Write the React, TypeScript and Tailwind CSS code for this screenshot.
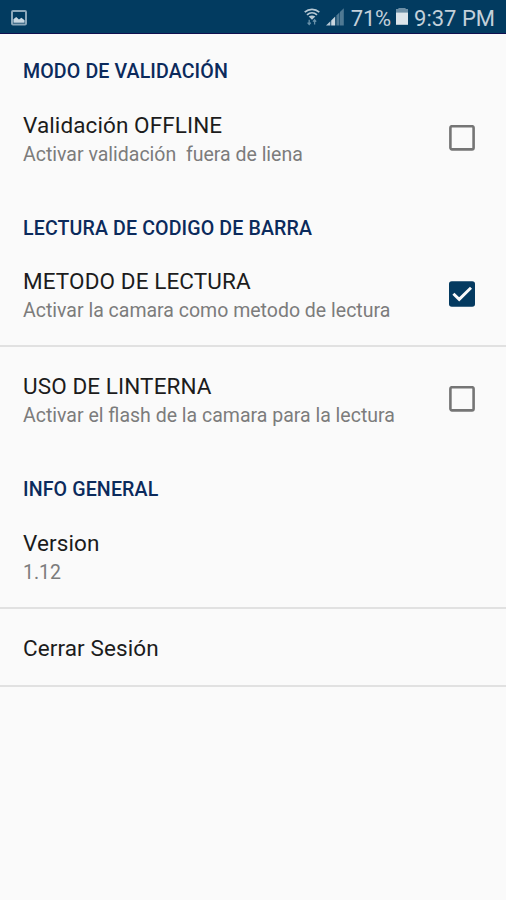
import React, { useState } from 'react';

interface CheckboxProps {
  checked: boolean;
}

const Checkbox: React.FC<CheckboxProps> = ({ checked }) => (
  <svg className="w-[26px] h-[26px] shrink-0 mb-[3px]" viewBox="0 0 26 26" fill="none">
    {checked ? (
      <>
        <rect x="0" y="0.3" width="26" height="25.5" rx="2.8" fill="#043a60" />
        <path d="M4.4 12.7L10.2 18.4L22 6.7" stroke="#fafafa" strokeWidth="2.9" />
      </>
    ) : (
      <rect x="1.4" y="1.2" width="23.2" height="23.2" rx="1.6" stroke="#757575" strokeWidth="2.6" />
    )}
  </svg>
);

const StatusBar: React.FC = () => (
  <header className="h-[34px] shrink-0 flex items-center justify-between bg-[#023b60] border-b border-[#10104f] px-[11px] text-[#c3d0da]">
    <svg className="w-4 h-4 mt-0.5" viewBox="0 0 16 16" fill="none">
      <rect x="1" y="1" width="14" height="13.6" rx="1" stroke="#8ba7ba" strokeWidth="2" />
      <path d="M2.4 12.8V9.2L5.2 7L8 9.6L10.4 7.8L13.6 10.2V12.8Z" fill="#c9d8e2" />
    </svg>
    <div className="flex items-center">
      {/* wifi */}
      <svg className="w-4 h-[18px] mr-[6px]" viewBox="0 0 16 18" fill="none">
        <path d="M0.7 4.2C4.9 0.4 11.1 0.4 15.3 4.2" stroke="#b6c8d4" strokeWidth="1.7" />
        <path d="M3 6.8C6 4.2 10 4.2 13 6.8" stroke="#b6c8d4" strokeWidth="1.7" />
        <path d="M4.7 8.6C6.7 7.1 9.3 7.1 11.3 8.6L8 11.8Z" fill="#b6c8d4" />
        <path d="M5.2 11.8V16.6M3.6 14.7L5.2 16.6L6.8 14.7M10.6 16.6V11.8M9 13.7L10.6 11.8L12.2 13.7" stroke="#6890a8" strokeWidth="1.3" />
      </svg>
      {/* mobile signal */}
      <svg className="w-[18px] h-[18px] mr-[7px]" viewBox="0 0 18 18">
        <path d="M0 17.5L4.4 13.2V17.5Z" fill="#b6c8d4" />
        <path d="M5.2 12.4L9.2 8.6V17.5H5.2Z" fill="#c9d6df" />
        <path d="M10.4 7.4L13.4 4.5V17.5H10.4Z" fill="#4f7993" />
        <path d="M13.9 4L17.8 0.2V17.5H13.9Z" fill="#4f7993" />
      </svg>
      <span className="text-[22px] leading-8 tracking-[-0.2px] mt-1">71%</span>
      {/* battery */}
      <svg className="w-3 h-[18px] ml-[5px] mr-[6px]" viewBox="0 0 12 18">
        <path d="M2.4 0H9.6V1H12V6H0V1H2.4Z" fill="#6d8fa6" />
        <path d="M0 4.6H12V16.8H0Z" fill="#dce5eb" />
      </svg>
      <span className="text-[22px] leading-8 mt-1">9:37 PM</span>
    </div>
  </header>
);

interface CategoryProps {
  title: string;
  className: string;
  children: React.ReactNode;
}

const Category: React.FC<CategoryProps> = ({ title, className, children }) => (
  <section>
    <h2
      className={`${className} px-[23px] text-[19.6px] leading-7 tracking-[0.12px] font-medium text-[#0b2a5c]`}
    >
      {title}
    </h2>
    {children}
  </section>
);

interface PreferenceProps {
  title: string;
  summary?: string;
  checked?: boolean;
  divider?: boolean;
  onClick?: () => void;
}

const Preference: React.FC<PreferenceProps> = ({ title, summary, checked, divider, onClick }) => (
  <button
    onClick={onClick}
    className={`w-full flex items-center justify-between text-left pt-6 pl-[23px] pr-[31px] ${
      summary ? 'pb-5' : 'pb-[22px]'
    } ${divider ? 'border-b-2 border-[#e1e1e1]' : ''}`}
  >
    <div>
      <p className="text-[22.5px] leading-[30px] tracking-[0.1px] text-[#1c1c1c]">{title}</p>
      {summary && (
        <p className="mt-px text-[19.5px] leading-7 text-[#7c7c7c] whitespace-pre">{summary}</p>
      )}
    </div>
    {checked !== undefined && <Checkbox checked={checked} />}
  </button>
);

export default function App() {
  const [offline, setOffline] = useState(false);
  const [camera, setCamera] = useState(true);
  const [flash, setFlash] = useState(false);

  return (
    <div className="w-full h-screen flex flex-col bg-[#fafafa] font-[Roboto,sans-serif] overflow-hidden">
      <StatusBar />
      <main className="flex-1">
        <Category title="MODO DE VALIDACIÓN" className="h-[52px] pt-[24px]">
          <Preference
            title="Validación OFFLINE"
            summary="Activar validación  fuera de liena"
            checked={offline}
            onClick={() => setOffline(!offline)}
          />
        </Category>
        <Category title="LECTURA DE CODIGO DE BARRA" className="h-[53px] pt-[26px]">
          <Preference
            title="METODO DE LECTURA"
            summary="Activar la camara como metodo de lectura"
            checked={camera}
            divider
            onClick={() => setCamera(!camera)}
          />
          <Preference
            title="USO DE LINTERNA"
            summary="Activar el flash de la camara para la lectura"
            checked={flash}
            onClick={() => setFlash(!flash)}
          />
        </Category>
        <Category title="INFO GENERAL" className="h-[54px] pt-[26px]">
          <Preference title="Version" summary="1.12" divider />
          <Preference title="Cerrar Sesión" divider />
        </Category>
      </main>
    </div>
  );
}
